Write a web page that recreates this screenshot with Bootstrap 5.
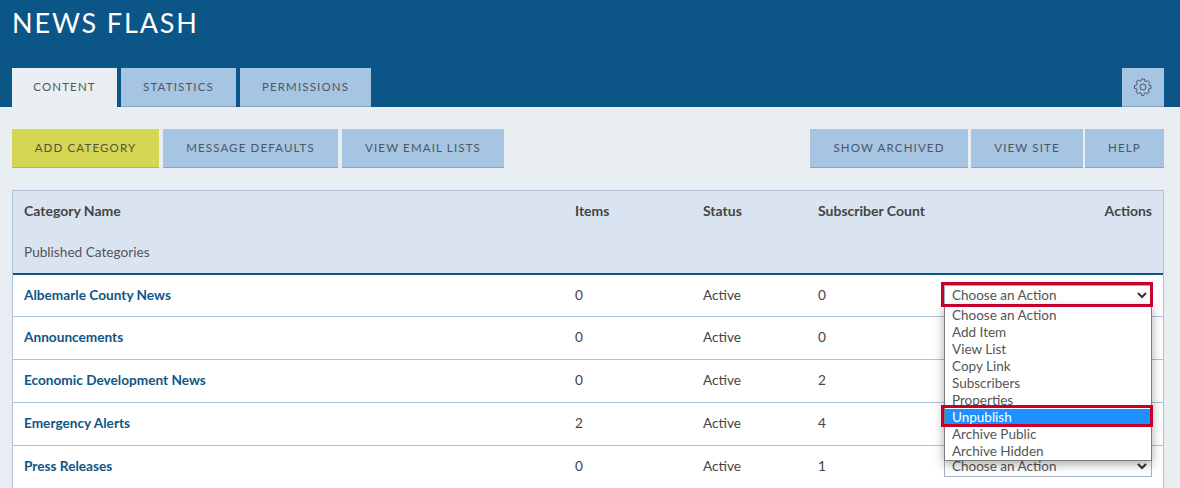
<!DOCTYPE html>
<html lang="en">
<head>
<meta charset="utf-8">
<title>News Flash</title>
<link rel="stylesheet" href="https://cdn.jsdelivr.net/npm/bootstrap@5.3.0/dist/css/bootstrap.min.css">
<style>
html,body{height:488px;overflow:hidden}
body{background:#e9eef2;font-family:Lato,"Open Sans",sans-serif;font-size:14px;color:#444}
.topband{background:#0b5587;height:107px;padding:0 16px 0 12px}
.pagetitle{color:#fff;font-size:27px;font-weight:400;letter-spacing:1.85px;line-height:32px;margin:0;padding-top:7px}
.tabrow{height:39px;margin-top:29px}
.tabbtn,.actbtn{display:flex;align-items:center;justify-content:center;background:#a6c5e3;color:#4d5664;font-size:11.5px;letter-spacing:1.15px;text-transform:uppercase;border:0;border-bottom:1px solid #85a6c9;border-radius:0;padding:0;text-decoration:none}
.tabbtn{height:39px}
.tabbtn.current{background:#e9eef2;border-bottom-color:#e9eef2;color:#555}
.w-content{width:105px}.w-stats{width:115px}.w-perm{width:131px}.w-gear{width:42px}
.actbtn{height:39px}
.actbtn.primaryact{background:#d4d654;border-bottom-color:#b5b846;color:#55533a}
.w-add{width:147px}.w-msg{width:175px}.w-lists{width:162px}.w-arch{width:158px;margin-right:3px}.w-site{width:112px;margin-right:2px}.w-help{width:79px}
.actionbar{padding:22px 16px 0 12px;height:83px}
.tablewrap{margin:0 16px 0 12px;position:relative}
.newstable{width:1152px;table-layout:fixed;margin:0;border:1px solid #b1c2d4;border-bottom:0;background:#fff;border-collapse:separate;border-spacing:0}
.newstable th,.newstable td{padding:0 11px;vertical-align:middle;border:0;box-shadow:none;background:transparent;color:#444;font-size:13.65px}
.newstable thead{background:#dae4f0}
.newstable thead th{font-weight:700;height:41px;font-size:14px;white-space:nowrap;padding-bottom:2px}
.newstable thead tr.subhead td{height:43px;border-bottom:2px solid #0b5587;color:#555;padding-bottom:0}
.newstable tbody td{height:43px;border-bottom:1px solid #b1c2d4;padding-bottom:2px}
.newstable tbody tr:first-child td{height:42px;padding-bottom:0}
.newstable tbody td.selectcell{padding-left:0}
.newstable a{color:#0e5687;font-weight:700;text-decoration:none}
.fakeselect{height:21px;width:208px;margin-left:auto;border:1px solid #9fb0c2;background:#fff;color:#555;font-size:13.5px;line-height:19px;padding-left:7px;display:flex;align-items:center;justify-content:space-between}
.fakeselect svg{margin-right:4px}
.overselect{left:932px;top:95px}
.redbox{position:absolute;border:3px solid #c8002d;pointer-events:none}
.redbox.one{left:929px;top:92px;width:212px;height:25px}
.redbox.two{left:929px;top:215px;width:212px;height:22px}
.optlist{position:absolute;left:932px;top:116px;width:208px;background:#fff;border:1px solid #7b7b7b;box-shadow:0 3px 10px rgba(0,0,0,.35);list-style:none;margin:0;padding:0;color:#555;font-size:13.5px}
.optlist li{height:17px;line-height:17px;padding-left:7px}
.optlist li.picked{background:#1e90ff;color:#fff}
</style>
</head>
<body>
<header class="topband">
  <h1 class="pagetitle">NEWS FLASH</h1>
  <div class="tabrow d-flex justify-content-between">
    <nav class="d-flex gap-1">
      <a class="tabbtn current w-content" href="#">Content</a>
      <a class="tabbtn w-stats" href="#">Statistics</a>
      <a class="tabbtn w-perm" href="#">Permissions</a>
    </nav>
    <button class="tabbtn w-gear" type="button" aria-label="Settings">
      <svg width="18" height="18" viewBox="0 0 18 18" fill="none" stroke="#4d5664" stroke-width="1"><circle cx="9" cy="9" r="3"/><path d="M7.6 1h2.8l.4 2.1 1.3.6 1.8-1.2 2 2-1.2 1.8.6 1.3L17 7.6v2.8l-2.2.4-.6 1.3 1.2 1.8-2 2-1.8-1.2-1.3.6-.4 2.1H7.6l-.4-2.1-1.3-.6-1.8 1.2-2-2 1.2-1.8-.6-1.3L.5 10.4V7.6l2.2-.4.6-1.3L2.1 4.1l2-2 1.8 1.2 1.3-.6z"/></svg>
    </button>
  </div>
</header>
<div class="actionbar d-flex justify-content-between">
  <div class="d-flex gap-1">
    <a class="actbtn primaryact w-add" href="#">Add Category</a>
    <a class="actbtn w-msg" href="#">Message Defaults</a>
    <a class="actbtn w-lists" href="#">View Email Lists</a>
  </div>
  <div class="d-flex">
    <a class="actbtn w-arch" href="#">Show Archived</a>
    <a class="actbtn w-site" href="#">View Site</a>
    <a class="actbtn w-help" href="#">Help</a>
  </div>
</div>
<div class="tablewrap">
  <table class="table newstable">
    <colgroup><col style="width:551px"><col style="width:128px"><col style="width:115px"><col style="width:128px"><col></colgroup>
    <thead>
      <tr><th>Category Name</th><th>Items</th><th>Status</th><th>Subscriber Count</th><th class="text-end">Actions</th></tr>
      <tr class="subhead"><td colspan="5">Published Categories</td></tr>
    </thead>
    <tbody>
      <tr><td><a href="#">Albemarle County News</a></td><td>0</td><td>Active</td><td>0</td><td></td></tr>
      <tr><td><a href="#">Announcements</a></td><td>0</td><td>Active</td><td>0</td><td></td></tr>
      <tr><td><a href="#">Economic Development News</a></td><td>0</td><td>Active</td><td>2</td><td></td></tr>
      <tr><td><a href="#">Emergency Alerts</a></td><td>2</td><td>Active</td><td>4</td><td></td></tr>
      <tr><td><a href="#">Press Releases</a></td><td>0</td><td>Active</td><td>1</td><td class="selectcell"><div class="fakeselect"><span>Choose an Action</span><svg width="10" height="7" viewBox="0 0 10 7" fill="none" stroke="#333" stroke-width="2"><path d="M1 1l4 4 4-4"/></svg></div></td></tr>
    </tbody>
  </table>
  <div class="fakeselect position-absolute overselect"><span>Choose an Action</span><svg width="10" height="7" viewBox="0 0 10 7" fill="none" stroke="#333" stroke-width="2"><path d="M1 1l4 4 4-4"/></svg></div>
  <ul class="optlist">
    <li>Choose an Action</li><li>Add Item</li><li>View List</li><li>Copy Link</li><li>Subscribers</li><li>Properties</li><li class="picked">Unpublish</li><li>Archive Public</li><li>Archive Hidden</li>
  </ul>
  <div class="redbox one"></div>
  <div class="redbox two"></div>
</div>
</body>
</html>
